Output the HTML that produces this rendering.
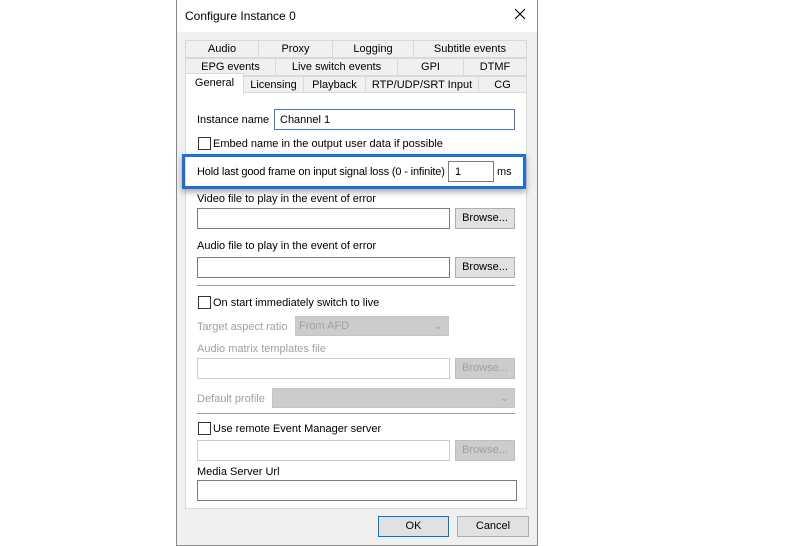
<!DOCTYPE html>
<html><head><style>
*{box-sizing:border-box;margin:0;padding:0}
body{width:800px;height:546px;background:#fff;position:relative;overflow:hidden;font-family:"Liberation Sans",sans-serif;font-size:11px;color:#000}
.a{position:absolute}
.t{position:absolute;white-space:nowrap;line-height:14px}
.tab{position:absolute;border:1px solid #d9d9d9;background:#f0f0f0;text-align:center;line-height:16px;white-space:nowrap}
.in{position:absolute;background:#fff;border:1px solid #7a7a7a}
.btn{position:absolute;background:#e1e1e1;border:1px solid #adadad;text-align:center;line-height:19px}
.dis{color:#a0a0a0}
.cb{position:absolute;width:13px;height:13px;border:1px solid #333;background:#fff}
.sep{position:absolute;height:2px;border-top:1px solid #a0a0a0;border-bottom:1px solid #fff}
</style></head><body>
<div class="a" style="left:176px;top:0;width:362px;height:546px;background:#f0f0f0;border:1px solid #888;border-top:none"></div>
<div class="a" style="left:177px;top:0;width:360px;height:32px;background:#fff"></div>
<div class="t" style="left:185px;top:9px;font-size:12px">Configure Instance 0</div>
<svg class="a" style="left:514px;top:8px" width="12" height="12"><path d="M1 1L11 11M11 1L1 11" stroke="#000" stroke-width="1.2"/></svg>
<div class="a" style="left:185px;top:92px;width:342px;height:417px;background:#fff;border:1px solid #d9d9d9"></div>
<div class="tab" style="left:185px;top:40px;width:74px;height:18px">Audio</div>
<div class="tab" style="left:258px;top:40px;width:75px;height:18px">Proxy</div>
<div class="tab" style="left:332px;top:40px;width:82px;height:18px">Logging</div>
<div class="tab" style="left:413px;top:40px;width:114px;height:18px">Subtitle events</div>
<div class="tab" style="left:185px;top:58px;width:91px;height:18px">EPG events</div>
<div class="tab" style="left:275px;top:58px;width:123px;height:18px">Live switch events</div>
<div class="tab" style="left:397px;top:58px;width:67px;height:18px">GPI</div>
<div class="tab" style="left:463px;top:58px;width:64px;height:18px">DTMF</div>
<div class="tab" style="left:243px;top:76px;width:61px;height:17px">Licensing</div>
<div class="tab" style="left:303px;top:76px;width:63px;height:17px">Playback</div>
<div class="tab" style="left:365px;top:76px;width:114px;height:17px">RTP/UDP/SRT Input</div>
<div class="tab" style="left:478px;top:76px;width:49px;height:17px">CG</div>
<div class="tab" style="left:185px;top:73px;width:59px;height:21px;background:#fff;border-bottom:none;line-height:18px">General</div>
<div class="t" style="left:197px;top:113px">Instance name</div>
<div class="in" style="left:274px;top:109px;width:241px;height:21px;border-color:#3c7fd0"></div>
<div class="t" style="left:280px;top:113px">Channel 1</div>
<div class="cb" style="left:198px;top:137px"></div>
<div class="t" style="left:213px;top:137px">Embed name in the output user data if possible</div>
<div class="a" style="left:182px;top:154px;width:344px;height:35px;border:3px solid #1e6ed8;box-shadow:0 3px 6px rgba(0,0,0,.35)"></div>
<div class="t" style="left:197px;top:165px;letter-spacing:-0.15px">Hold last good frame on input signal loss (0 - infinite)</div>
<div class="in" style="left:448px;top:161px;width:46px;height:21px"></div>
<div class="t" style="left:455px;top:165px">1</div>
<div class="t" style="left:497px;top:165px">ms</div>
<div class="t" style="left:197px;top:192px">Video file to play in the event of error</div>
<div class="in" style="left:197px;top:208px;width:253px;height:21px"></div>
<div class="btn" style="left:455px;top:208px;width:60px;height:21px">Browse...</div>
<div class="t" style="left:197px;top:239px">Audio file to play in the event of error</div>
<div class="in" style="left:197px;top:257px;width:253px;height:21px"></div>
<div class="btn" style="left:455px;top:257px;width:60px;height:21px">Browse...</div>
<div class="sep" style="left:197px;top:285px;width:318px"></div>
<div class="cb" style="left:198px;top:296px"></div>
<div class="t" style="left:213px;top:296px">On start immediately switch to live</div>
<div class="t dis" style="left:197px;top:320px">Target aspect ratio</div>
<div class="a dis" style="left:295px;top:316px;width:154px;height:20px;background:#ccc;border:1px solid #c4c4c4;padding:3px 0 0 3px">From AFD<span style="position:absolute;right:5px;top:2px">⌄</span></div>
<div class="t dis" style="left:197px;top:342px">Audio matrix templates file</div>
<div class="in" style="left:197px;top:358px;width:253px;height:21px;border-color:#ccc"></div>
<div class="btn dis" style="left:455px;top:358px;width:60px;height:21px;background:#ccc;border-color:#bfbfbf">Browse...</div>
<div class="t dis" style="left:197px;top:392px">Default profile</div>
<div class="a dis" style="left:272px;top:388px;width:243px;height:20px;background:#ccc;border:1px solid #c4c4c4"><span style="position:absolute;right:5px;top:2px">⌄</span></div>
<div class="sep" style="left:197px;top:413px;width:318px"></div>
<div class="cb" style="left:198px;top:422px"></div>
<div class="t" style="left:213px;top:422px">Use remote Event Manager server</div>
<div class="in" style="left:197px;top:440px;width:253px;height:21px;border-color:#ccc"></div>
<div class="btn dis" style="left:455px;top:440px;width:60px;height:21px;background:#ccc;border-color:#bfbfbf">Browse...</div>
<div class="t" style="left:197px;top:465px">Media Server Url</div>
<div class="in" style="left:197px;top:480px;width:320px;height:21px"></div>
<div class="btn" style="left:378px;top:516px;width:71px;height:21px;border:1px solid #0078d7">OK</div>
<div class="btn" style="left:457px;top:516px;width:72px;height:21px">Cancel</div>
</body></html>
